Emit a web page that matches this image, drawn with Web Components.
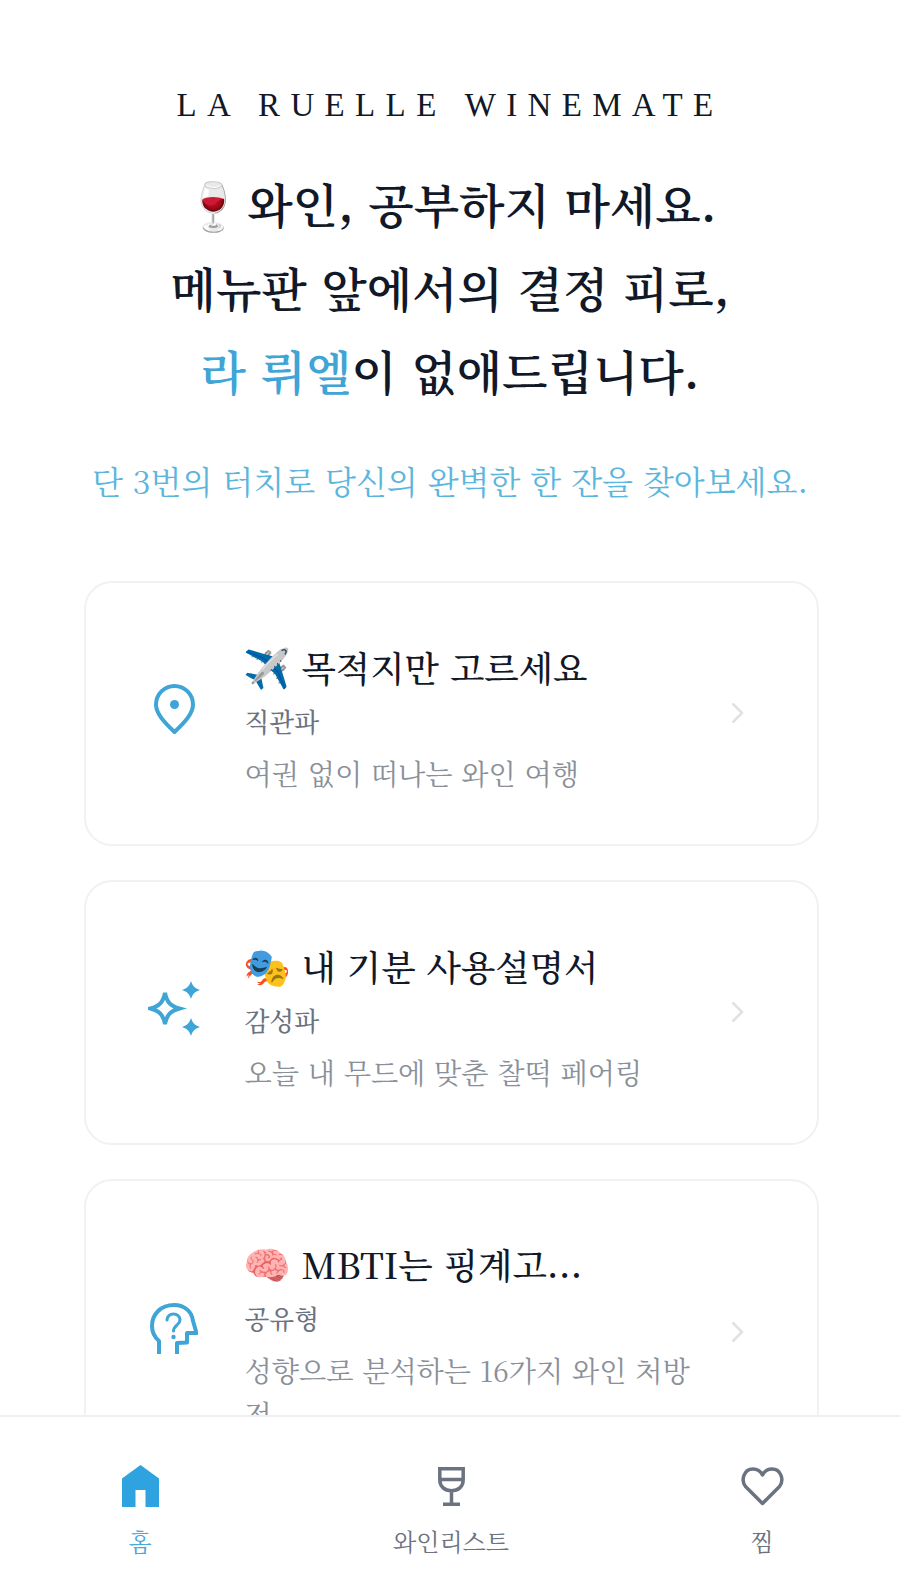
<!doctype html>
<html lang="ko"><head><meta charset="utf-8">
<style>
html,body{margin:0;height:100%;background:#fff}
body{font-family:"Noto Serif CJK KR","Liberation Serif","Noto Sans CJK KR",serif;overflow:hidden}
.e{font-size:1.08em;margin-left:-2px;word-spacing:-1px}
</style></head><body>
<template id="t-app"><style>
:host{display:flex;flex-direction:column;height:1577px;width:900px;overflow:hidden}
main{flex:1;min-height:0;overflow:hidden;padding:0 84px}
</style><main><slot></slot></main><slot name="nav"></slot></template>

<template id="t-hero"><style>
:host{display:block;text-align:center;padding:87px 0 79px;margin:0 -60px}
.brand{font-family:"Liberation Serif",serif;font-size:33px;line-height:36px;letter-spacing:10.35px;color:#111827;white-space:nowrap}
h1{margin:38px 0 0;font-size:47px;line-height:83.5px;font-weight:600;color:#111827;white-space:nowrap}
h1 em{font-style:normal;color:#3fa4d6}
h1 .g{word-spacing:-10px}
p{margin:46px 0 0;font-size:32px;line-height:44px;color:#5bb6de;white-space:nowrap}
</style><div class="brand">LA RUELLE WINEMATE</div>
<h1><span class="g">🍷 </span>와인, 공부하지 마세요.<br>메뉴판 앞에서의 결정 피로,<br><em>라 뤼엘</em>이 없애드립니다.</h1>
<p>단 3번의 터치로 당신의 완벽한 한 잔을 찾아보세요.</p></template>

<template id="t-card"><style>
:host{display:grid;grid-template-columns:88px 495px 48px;column-gap:0;align-items:center;box-sizing:border-box;width:735px;min-height:265px;padding:48px 0 48px 44px;border:2px solid #f0f1f3;border-radius:28px;background:#fff;margin-bottom:34px;flex:none}
.ic{display:flex;justify-content:center;color:#3fa4d6;margin-bottom:8px}
.t{padding:8px 0 0 26.500px}
h2{margin:0;font-size:35.600px;line-height:52px;font-weight:500;color:#111827}
.tag{font-size:25.700px;line-height:36px;margin-top:10px;color:#6b7280;font-weight:500}
.d{font-size:28.200px;line-height:44px;margin-top:12px;color:#8a909a}
.ch{display:flex;justify-content:center;color:#dfe1e5}
</style><div class="ic"><slot name="icon"></slot></div>
<div class="t"><h2><slot name="title"></slot></h2><div class="tag"><slot name="tag"></slot></div><div class="d"><slot name="desc"></slot></div></div>
<div class="ch"><svg width="30" height="30" viewBox="0 0 24 24" fill="none" stroke="currentColor" stroke-width="2" stroke-linecap="round" stroke-linejoin="round"><path d="M9 5l7 7-7 7"/></svg></div></template>

<template id="t-nav"><style>
:host{display:flex;flex:none;justify-content:space-between;height:162px;border-top:2px solid #eeeff1;background:#fff;box-sizing:border-box;padding:0 77px 0 79px}
</style><slot></slot></template>
<template id="t-tab"><style>
:host{display:flex;flex-direction:column;align-items:center;width:122px;padding-top:48px;color:#6b7280;white-space:nowrap}
:host([active]){color:#4aa8d8}
.i{height:42px;display:flex;align-items:center}
.l{font-size:24px;line-height:36px;margin-top:16px}
</style><div class="i"><slot name="icon"></slot></div><div class="l"><slot></slot></div></template>

<la-app>
<la-hero></la-hero>
<la-card><svg slot="icon" width="41" height="51" viewBox="0 0 41 51" fill="none" stroke="#3fa4d6" stroke-width="4"><path d="M20.500 48C9 37 2 29 2 20.500a18.500 18.500 0 0 1 37 0C39 29 32 37 20.500 48z" stroke-linejoin="round"/><circle cx="20.500" cy="20.500" r="4.500" fill="#3fa4d6" stroke="none"/></svg><span slot="title"><span class="e">✈️ </span>목적지만 고르세요</span><span slot="tag">직관파</span><span slot="desc">여권 없이 떠나는 와인 여행</span></la-card>
<la-card><svg slot="icon" width="52" height="55" viewBox="0 0 52 55" fill="#3fa4d6"><path fill="none" stroke="#3fa4d6" stroke-width="4" stroke-linejoin="miter" d="M17 12c2 9.500 5.500 13 14.500 15.500-9 2.500-12.500 6-14.500 15.500-2-9.500-5.500-13-14.500-15.500C11.500 25 15 21.500 17 12z"/><path d="M43 0c2 5.500 3.500 7 9 9-5.500 2-7 3.500-9 9-2-5.500-3.500-7-9-9 5.500-2 7-3.500 9-9zM43 37c2 5.500 3.500 7 9 9-5.500 2-7 3.500-9 9-2-5.500-3.500-7-9-9 5.500-2 7-3.500 9-9z"/></svg><span slot="title"><span class="e">🎭 </span>내 기분 사용설명서</span><span slot="tag">감성파</span><span slot="desc">오늘 내 무드에 맞춘 찰떡 페어링</span></la-card>
<la-card><svg slot="icon" width="48" height="51" viewBox="0 0 48 51" fill="none" stroke="#3fa4d6" stroke-width="4"><path d="M9 51V38C4.500 34 2 29 2 23 2 11 11 2 24 2c11 0 18 7 19 16l3.500 12H37v9.500L27 40v11" stroke-linejoin="round"/><path d="M17 17c0-3.500 3-6 6.500-6s6.500 2.500 6.500 6c0 5-6.500 5.500-6.500 11" stroke-width="3" stroke-linecap="round"/><circle cx="23.500" cy="34" r="2.200" fill="#3fa4d6" stroke="none"/></svg><span slot="title"><span class="e">🧠 </span>MBTI는 핑계고...</span><span slot="tag">공유형</span><span slot="desc">성향으로 분석하는 16가지 와인 처방전</span></la-card>
<la-nav slot="nav">
<la-tab active><svg slot="icon" width="37" height="42" viewBox="0 0 37 42" fill="#2ea3e0"><path d="M18.500 0L37 13.500V42H23.500V25H13.500V42H0V13.500z"/></svg>홈</la-tab>
<la-tab><svg slot="icon" width="27" height="39" viewBox="0 0 27 39" fill="none" stroke="#6b7280" stroke-width="3.500"><path d="M1.800 1.800h23.400v11c0 7-5 11-11.700 11S1.800 19.800 1.800 12.800zM1.800 12.500h23.400M13.500 24v13M5 37.300h17"/></svg>와인리스트</la-tab>
<la-tab><svg slot="icon" width="43" height="39" viewBox="0 0 43 39" fill="none" stroke="#6b7280" stroke-width="3.500"><path d="M21.500 36.500L4.500 19.500C-.5 13 3 2 12 2c4 0 7.500 2 9.500 6 2-4 5.500-6 9.500-6 9 0 12.500 11 7.500 17.500z" stroke-linejoin="round"/></svg>찜</la-tab>
</la-nav>
</la-app>
<script>
for (const [tag, tpl] of [['la-app','t-app'],['la-hero','t-hero'],['la-card','t-card'],['la-nav','t-nav'],['la-tab','t-tab']]) {
  customElements.define(tag, class extends HTMLElement {
    constructor(){ super(); this.attachShadow({mode:'open'}).append(document.getElementById(tpl).content.cloneNode(true)); }
  });
}
</script>
</body></html>
